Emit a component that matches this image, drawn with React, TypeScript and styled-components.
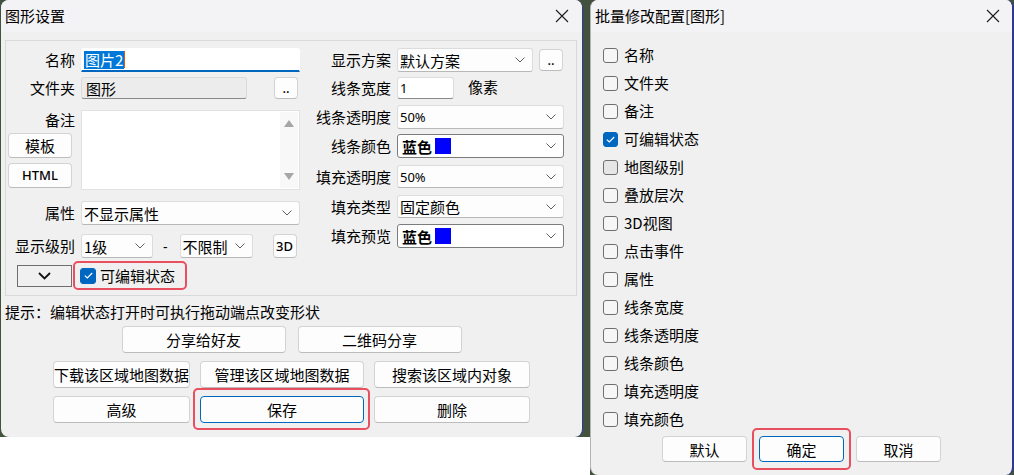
import React from "react";
import styled, { createGlobalStyle, css } from "styled-components";

const GlobalStyle = createGlobalStyle`
  html, body {
    margin: 0;
    padding: 0;
    background: #ffffff;
  }
  body {
    font-family: "Noto Sans CJK SC", "Noto Sans", sans-serif;
    font-size: 15px;
    color: #000;
  }
  * {
    box-sizing: border-box;
  }
`;

const CJK = `"Noto Sans CJK SC", "Noto Sans", sans-serif`;
const LATIN = `"Noto Sans", "Noto Sans CJK SC", sans-serif`;

const Page = styled.div`
  display: flex;
  align-items: flex-start;
  width: 1014px;
  height: 475px;
  overflow: hidden;
`;

const Backdrop = styled.div<{ $width: number; $height: number; $pad: string }>`
  display: flex;
  width: ${(p) => p.$width}px;
  height: ${(p) => p.$height}px;
  padding: ${(p) => p.$pad};
  background: #43513f;
  flex: none;
`;

const Dialog = styled.div<{ $edge: number; $left?: boolean }>`
  flex: 1;
  display: flex;
  flex-direction: column;
  background: #f0f0f0;
  border-radius: 8px;
  overflow: hidden;
  border-right: ${(p) => p.$edge}px solid #2d3a8e;
  border-left: ${(p) => (p.$left ? "1px solid #b4b4b4" : "none")};
`;

const TitleBar = styled.div<{ $pad: number }>`
  flex: none;
  height: 32px;
  display: flex;
  align-items: center;
  justify-content: space-between;
  padding: 0 ${(p) => p.$pad}px 0 4px;
  background: #f3f2f5;
`;

const Title = styled.div`
  font-size: 15px;
  line-height: 20px;
`;

const CloseIcon = () => (
  <svg width="14" height="14" viewBox="0 0 14 14">
    <path d="M1 1 L13 13 M13 1 L1 13" stroke="#1b1b1b" strokeWidth="1.1" fill="none" />
  </svg>
);

/* ---------- left dialog ---------- */

const GroupBox = styled.div`
  margin: 8px 0 0 4px;
  width: 572px;
  height: 256px;
  border: 1px solid #d9d9d9;
  display: flex;
`;

const Column = styled.div<{ $w?: number }>`
  display: flex;
  flex-direction: column;
  width: ${(p) => (p.$w ? `${p.$w}px` : "auto")};
  flex: ${(p) => (p.$w ? "none" : "1")};
`;

const Row = styled.div<{ $top: number; $h: number; $align?: string }>`
  display: flex;
  align-items: ${(p) => p.$align ?? "center"};
  margin-top: ${(p) => p.$top}px;
  height: ${(p) => p.$h}px;
`;

const Label = styled.div<{ $w: number }>`
  flex: none;
  width: ${(p) => p.$w}px;
  margin-right: 6px;
  text-align: right;
  white-space: nowrap;
  line-height: 20px;
`;

const fieldBase = css`
  height: 100%;
  display: flex;
  align-items: center;
  flex: none;
  background: #fdfdfd;
  border: 1px solid #dcdcdc;
  border-bottom-color: #b8b8b8;
  border-radius: 3px;
  padding: 0 2px;
  white-space: nowrap;
`;

const Select = styled.div<{ $w: number; $dark?: boolean; $latin?: boolean }>`
  ${fieldBase};
  width: ${(p) => p.$w}px;
  justify-content: space-between;
  padding-right: 7px;
  font-family: ${(p) => (p.$latin ? LATIN : CJK)};
  font-size: ${(p) => (p.$latin ? 13 : 15)}px;
  ${(p) =>
    p.$dark &&
    css`
      border-color: #7c7c7c;
      background: #ffffff;
    `}
`;

const Chevron = () => (
  <svg width="10" height="6" viewBox="0 0 10 6">
    <path d="M0.5 0.5 L5 5 L9.5 0.5" stroke="#606060" strokeWidth="1" fill="none" />
  </svg>
);

const TextInput = styled.div<{ $w: number; $state: "focus" | "disabled" | "plain" }>`
  ${fieldBase};
  width: ${(p) => p.$w}px;
  font-family: ${CJK};
  ${(p) =>
    p.$state === "focus" &&
    css`
      background: #ffffff;
      border-color: #ffffff;
      border-bottom: 2px solid #0067c0;
      border-radius: 3px 3px 0 0;
    `}
  ${(p) =>
    p.$state === "disabled" &&
    css`
      background: #ececec;
      border-color: #dadada;
      border-bottom-color: #8a8a8a;
      padding-left: 4px;
    `}
  ${(p) =>
    p.$state === "plain" &&
    css`
      background: #ffffff;
      border-bottom-color: #8a8a8a;
      font-family: ${LATIN};
      font-size: 13px;
    `}
`;

const Selection = styled.span`
  background: #0078d7;
  color: #ffffff;
  line-height: 18px;
  padding: 0 1px;
`;

const Caret = styled.span`
  display: inline-block;
  width: 1px;
  height: 17px;
  background: #d85a10;
`;

const Button = styled.button<{ $w: number; $h: number; $latin?: boolean; $primary?: boolean; $ml?: number }>`
  position: relative;
  flex: none;
  width: ${(p) => p.$w}px;
  height: ${(p) => p.$h}px;
  margin-left: ${(p) => p.$ml ?? 0}px;
  padding: 0;
  background: #fdfdfd;
  border: 1px solid #d3d3d3;
  border-bottom-color: #bcbcbc;
  border-radius: 4px;
  color: #000;
  font-family: ${(p) => (p.$latin ? LATIN : CJK)};
  font-size: ${(p) => (p.$latin ? 13 : 15)}px;
  font-weight: ${(p) => (p.$latin ? 500 : 400)};
  line-height: 1;
  white-space: nowrap;
  ${(p) =>
    p.$primary &&
    css`
      border-color: #0067c0;
    `}
`;

const Mark = styled.span<{ $t: number; $r: number; $b: number; $l: number }>`
  position: absolute;
  top: -${(p) => p.$t}px;
  right: -${(p) => p.$r}px;
  bottom: -${(p) => p.$b}px;
  left: -${(p) => p.$l}px;
  border: 2px solid #e9505f;
  border-radius: 5px;
  pointer-events: none;
`;

const ColorValue = styled.span`
  display: flex;
  align-items: center;
  font-weight: 700;
  font-size: 15px;
  padding-left: 2px;
`;

const Swatch = styled.span<{ $color: string }>`
  display: inline-block;
  width: 16px;
  height: 16px;
  margin-left: 3px;
  background: ${(p) => p.$color};
`;

const NoteSide = styled.div`
  flex: none;
  width: 69px;
  margin-right: 6px;
  display: flex;
  flex-direction: column;
  align-items: flex-start;
`;

const NoteLabel = styled.div`
  align-self: stretch;
  text-align: right;
  line-height: 20px;
  margin-bottom: 3px;
`;

const SideButton = styled(Button)`
  margin: 0 0 5px 2px;
`;

const TextArea = styled.div`
  width: 219px;
  height: 80px;
  background: #ffffff;
  border: 1px solid #e2e2e2;
  display: flex;
  justify-content: flex-end;
  padding: 1px 1px 1px 0;
`;

const ScrollTrack = styled.div`
  width: 18px;
  display: flex;
  flex-direction: column;
  justify-content: space-between;
  align-items: center;
  padding: 8px 0 8px;
  background: #f8f8f8;
`;

const Triangle = styled.span<{ $down?: boolean }>`
  width: 0;
  height: 0;
  border-left: 5px solid transparent;
  border-right: 5px solid transparent;
  ${(p) => (p.$down ? "border-top: 7px solid #a6a6a6;" : "border-bottom: 7px solid #a6a6a6;")}
`;

const Dash = styled.span`
  margin: 0 12px 0 10px;
  font-family: ${LATIN};
  font-size: 14px;
`;

const Unit = styled.span`
  margin: -4px 0 0 14px;
`;

const DropButton = styled.div`
  width: 55px;
  height: 22px;
  margin-left: 11px;
  border: 1px solid #6e6e6e;
  background: #f0f0f0;
  display: flex;
  align-items: center;
  justify-content: center;
`;

const MarkedLabel = styled.label`
  display: flex;
  align-items: center;
  gap: 4px;
  margin-left: 1px;
  width: 114px;
  height: 29px;
  padding: 0 5px;
  border: 2px solid #e9505f;
  border-radius: 5px;
  white-space: nowrap;
`;

const Box = styled.span<{ $checked?: boolean; $size: number; $hover?: boolean }>`
  flex: none;
  width: ${(p) => p.$size}px;
  height: ${(p) => p.$size}px;
  border-radius: 3px;
  border: 1px solid #6f6f6f;
  background: ${(p) => (p.$hover ? "#e6e6e6" : "#f6f6f6")};
  display: flex;
  align-items: center;
  justify-content: center;
  ${(p) =>
    p.$checked &&
    css`
      background: #0067c0;
      border-color: #0067c0;
    `}
`;

const Check = ({ checked, size, hover }: { checked?: boolean; size: number; hover?: boolean }) => (
  <Box $checked={checked} $size={size} $hover={hover}>
    {checked && (
      <svg width="9" height="7" viewBox="0 0 9 7">
        <path d="M0.8 3.6 L3.3 6 L8.2 1" stroke="#ffffff" strokeWidth="1.2" fill="none" />
      </svg>
    )}
  </Box>
);

const Hint = styled.div`
  margin: 6px 0 0 4px;
  line-height: 20px;
  white-space: nowrap;
`;

const ButtonRows = styled.div`
  display: flex;
  flex-direction: column;
  gap: 8px;
  margin-top: 4px;
`;

const ButtonRow = styled.div<{ $gap: number }>`
  display: flex;
  justify-content: center;
  gap: ${(p) => p.$gap}px;
`;

/* ---------- right dialog ---------- */

const CheckList = styled.div`
  display: flex;
  flex-direction: column;
  padding: 9px 0 0 12px;
`;

const CheckRow = styled.label`
  display: flex;
  align-items: center;
  gap: 6px;
  height: 28px;
  line-height: 20px;
`;

const Footer = styled.div`
  display: flex;
  justify-content: center;
  gap: 12px;
  margin-top: 3px;
`;

const batchItems = [
  "名称",
  "文件夹",
  "备注",
  "可编辑状态",
  "地图级别",
  "叠放层次",
  "3D视图",
  "点击事件",
  "属性",
  "线条宽度",
  "线条透明度",
  "线条颜色",
  "填充透明度",
  "填充颜色",
];

const App = () => {
  return (
    <>
      <GlobalStyle />
      <Page>
        <Backdrop $width={590} $height={437} $pad="0 7px 0 1px">
          <Dialog $edge={1}>
            <TitleBar $pad={13}>
              <Title>图形设置</Title>
              <CloseIcon />
            </TitleBar>

            <GroupBox>
              <Column $w={294}>
                <Row $top={7} $h={24}>
                  <Label $w={69}>名称</Label>
                  <TextInput $w={219} $state="focus">
                    <Selection>图片2</Selection>
                    <Caret />
                  </TextInput>
                </Row>
                <Row $top={5} $h={22}>
                  <Label $w={69}>文件夹</Label>
                  <TextInput $w={166} $state="disabled">
                    图形
                  </TextInput>
                  <Button $w={24} $h={22} $latin $ml={27}>
                    ..
                  </Button>
                </Row>
                <Row $top={11} $h={80} $align="flex-start">
                  <NoteSide>
                    <NoteLabel>备注</NoteLabel>
                    <SideButton $w={64} $h={25}>
                      模板
                    </SideButton>
                    <SideButton $w={64} $h={25} $latin>
                      HTML
                    </SideButton>
                  </NoteSide>
                  <TextArea>
                    <ScrollTrack>
                      <Triangle />
                      <Triangle $down />
                    </ScrollTrack>
                  </TextArea>
                </Row>
                <Row $top={11} $h={24}>
                  <Label $w={69}>属性</Label>
                  <Select $w={219}>
                    不显示属性
                    <Chevron />
                  </Select>
                </Row>
                <Row $top={9} $h={24}>
                  <Label $w={69}>显示级别</Label>
                  <Select $w={72}>
                    1级
                    <Chevron />
                  </Select>
                  <Dash>-</Dash>
                  <Select $w={73}>
                    不限制
                    <Chevron />
                  </Select>
                  <Button $w={24} $h={24} $latin $ml={20}>
                    3D
                  </Button>
                </Row>
                <Row $top={3} $h={29}>
                  <DropButton>
                    <svg width="13" height="8" viewBox="0 0 13 8">
                      <path d="M1 1 L6.5 6.5 L12 1" stroke="#111" strokeWidth="1.8" fill="none" />
                    </svg>
                  </DropButton>
                  <MarkedLabel>
                    <Check checked size={16} />
                    可编辑状态
                  </MarkedLabel>
                </Row>
              </Column>

              <Column>
                <Row $top={7} $h={24}>
                  <Label $w={91}>显示方案</Label>
                  <Select $w={136}>
                    默认方案
                    <Chevron />
                  </Select>
                  <Button $w={24} $h={22} $latin $ml={6}>
                    ..
                  </Button>
                </Row>
                <Row $top={5} $h={22}>
                  <Label $w={91}>线条宽度</Label>
                  <TextInput $w={57} $state="plain">
                    1
                  </TextInput>
                  <Unit>像素</Unit>
                </Row>
                <Row $top={6} $h={24}>
                  <Label $w={91}>线条透明度</Label>
                  <Select $w={167} $latin>
                    50%
                    <Chevron />
                  </Select>
                </Row>
                <Row $top={5} $h={24}>
                  <Label $w={91}>线条颜色</Label>
                  <Select $w={167} $dark>
                    <ColorValue>
                      蓝色
                      <Swatch $color="#0000ff" />
                    </ColorValue>
                    <Chevron />
                  </Select>
                </Row>
                <Row $top={7} $h={23}>
                  <Label $w={91}>填充透明度</Label>
                  <Select $w={167} $latin>
                    50%
                    <Chevron />
                  </Select>
                </Row>
                <Row $top={7} $h={23}>
                  <Label $w={91}>填充类型</Label>
                  <Select $w={167}>
                    固定颜色
                    <Chevron />
                  </Select>
                </Row>
                <Row $top={6} $h={24}>
                  <Label $w={91}>填充预览</Label>
                  <Select $w={167} $dark>
                    <ColorValue>
                      蓝色
                      <Swatch $color="#0000ff" />
                    </ColorValue>
                    <Chevron />
                  </Select>
                </Row>
              </Column>
            </GroupBox>

            <Hint>提示：编辑状态打开时可执行拖动端点改变形状</Hint>

            <ButtonRows>
              <ButtonRow $gap={12}>
                <Button $w={164} $h={27}>
                  分享给好友
                </Button>
                <Button $w={164} $h={27}>
                  二维码分享
                </Button>
              </ButtonRow>
              <ButtonRow $gap={10}>
                <Button $w={137} $h={27}>
                  下载该区域地图数据
                </Button>
                <Button $w={164} $h={27}>
                  管理该区域地图数据
                </Button>
                <Button $w={156} $h={27}>
                  搜索该区域内对象
                </Button>
              </ButtonRow>
              <ButtonRow $gap={10}>
                <Button $w={137} $h={27}>
                  高级
                </Button>
                <Button $w={164} $h={27} $primary>
                  保存
                  <Mark $t={9} $r={7} $b={8} $l={8} />
                </Button>
                <Button $w={156} $h={27}>
                  删除
                </Button>
              </ButtonRow>
            </ButtonRows>
          </Dialog>
        </Backdrop>

        <Backdrop $width={424} $height={475} $pad="0">
          <Dialog $edge={2} $left>
            <TitleBar $pad={12}>
              <Title>批量修改配置[图形]</Title>
              <CloseIcon />
            </TitleBar>
            <CheckList>
              {batchItems.map((item, i) => (
                <CheckRow key={item}>
                  <Check size={15} checked={i === 3} hover={i === 4} />
                  {item}
                </CheckRow>
              ))}
            </CheckList>
            <Footer>
              <Button $w={85} $h={26}>
                默认
              </Button>
              <Button $w={85} $h={26} $primary>
                确定
                <Mark $t={9} $r={8} $b={9} $l={8} />
              </Button>
              <Button $w={85} $h={26}>
                取消
              </Button>
            </Footer>
          </Dialog>
        </Backdrop>
      </Page>
    </>
  );
};

export default App;
